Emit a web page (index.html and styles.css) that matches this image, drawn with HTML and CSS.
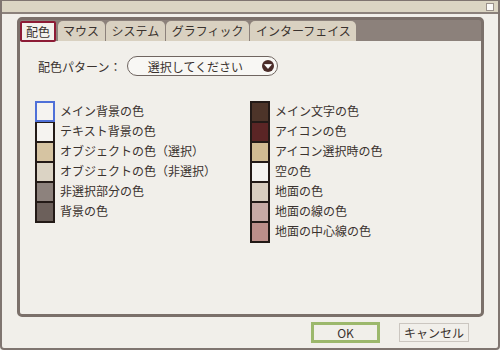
FILE: index.html
```html
<!DOCTYPE html>
<html>
<head>
    <meta charset="utf-8">
    <title>配色</title>
    <link rel="stylesheet" href="styles.css">
</head>
<body>
    <div class="window">
        <div class="titlebar"><span class="title-btn"></span></div>
        <div class="main">
            <div class="panel">
                <div class="tabs">
                    <span class="tab active">配色</span>
                    <span class="tab">マウス</span>
                    <span class="tab">システム</span>
                    <span class="tab">グラフィック</span>
                    <span class="tab">インターフェイス</span>
                </div>
                <div class="content">
                    <div class="pattern">
                        <span class="pattern-label">配色パターン：</span>
                        <div class="select">
                            <span class="select-text">選択してください</span>
                            <svg class="select-arrow" width="12" height="12" viewBox="0 0 12 12">
                                <circle cx="6" cy="6" r="6" fill="#4b2c29"/>
                                <path d="M2.6 4.6 L9.4 4.6 L6 8.4 Z" fill="#fff" stroke="#fff" stroke-width="0.8" stroke-linejoin="round"/>
                            </svg>
                        </div>
                    </div>
                    <div class="colors">
                        <ul class="color-list">
                            <li><span class="swatch selected" style="background:#f5f3f0"></span>メイン背景の色</li>
                            <li><span class="swatch" style="background:#f5f3f0"></span>テキスト背景の色</li>
                            <li><span class="swatch" style="background:#d6c4a2"></span>オブジェクトの色（選択）</li>
                            <li><span class="swatch" style="background:#dbd3c4"></span>オブジェクトの色（非選択）</li>
                            <li><span class="swatch" style="background:#8d827d"></span>非選択部分の色</li>
                            <li><span class="swatch" style="background:#6c605b"></span>背景の色</li>
                        </ul>
                        <ul class="color-list">
                            <li><span class="swatch" style="background:#4d3429"></span>メイン文字の色</li>
                            <li><span class="swatch" style="background:#5b2525"></span>アイコンの色</li>
                            <li><span class="swatch" style="background:#d1bb93"></span>アイコン選択時の色</li>
                            <li><span class="swatch" style="background:#f5f3f0"></span>空の色</li>
                            <li><span class="swatch" style="background:#d9cdbf"></span>地面の色</li>
                            <li><span class="swatch" style="background:#c8aaa5"></span>地面の線の色</li>
                            <li><span class="swatch" style="background:#bd8f8a"></span>地面の中心線の色</li>
                        </ul>
                    </div>
                </div>
            </div>
            <div class="buttons">
                <button class="btn ok">OK</button>
                <button class="btn">キャンセル</button>
            </div>
        </div>
    </div>
</body>
</html>
```

FILE: styles.css
```css
/* Settings dialog, colour scheme tab */
body {
    margin: 0;
    font-family: "Noto Sans CJK JP", "Noto Sans", sans-serif;
    font-size: 12px;
    color: #3a322e;
    background: #f1efea;
}

.window {
    width: 500px;
    height: 350px;
    box-sizing: border-box;
    border: 2px solid #7f7570;
    border-top-width: 1px;
    border-radius: 0 0 4px 4px;
    background: #f1efea;
    display: flex;
    flex-direction: column;
}

.titlebar {
    height: 11px;
    flex: none;
    background: #dbd5c3;
    border-bottom: 2px solid #8b817b;
    display: flex;
    justify-content: flex-end;
    align-items: center;
    padding-right: 4px;
}

.title-btn {
    width: 6px;
    height: 6px;
    border: 1px solid #9a918b;
    background: #fbfaf8;
}

.main {
    flex: 1;
    padding: 3px 14px 0 15px;
    display: flex;
    flex-direction: column;
}

/* Tab panel */
.panel {
    height: 300px;
    box-sizing: border-box;
    border: 3px solid #7b706a;
    border-radius: 5px;
    background: #8c817b;
    display: flex;
    flex-direction: column;
    overflow: hidden;
}

.tabs {
    height: 21px;
    flex: none;
    display: flex;
    align-items: flex-end;
    gap: 1.5px;
}

.tab {
    height: 20px;
    box-sizing: border-box;
    padding: 0 5.5px;
    line-height: 20px;
    background: #d9d1c1;
    border-radius: 5px 5px 0 0;
    color: #3a322e;
    white-space: nowrap;
}

.tab.active {
    padding: 0 4px;
    line-height: 17px;
    height: 21px;
    border: 2px solid #8d1b36;
    border-radius: 2px;
    background: #f3f1ed;
    position: relative;
    top: 1px;
}

.content {
    flex: 1;
    background: #f1efea;
    padding: 15px 0 0 15px;
}

.pattern {
    display: flex;
    align-items: center;
    gap: 6px;
    height: 20px;
    margin-left: 3px;
}

.select {
    width: 151px;
    height: 20px;
    box-sizing: border-box;
    border: 1px solid #6f6560;
    border-radius: 10px;
    background: #f8f7f4;
    display: flex;
    align-items: center;
    padding-right: 3px;
}

.select-text {
    flex: 1;
    text-align: center;
}

.select-arrow {
    display: block;
    flex: none;
}

/* Colour swatches */
.colors {
    display: grid;
    grid-template-columns: 215px auto;
    margin-top: 25px;
}

.color-list {
    list-style: none;
    margin: 0;
    padding: 0;
}

.color-list li {
    display: flex;
    gap: 5px;
    height: 20px;
    line-height: 20px;
    white-space: nowrap;
}

.swatch {
    flex: none;
    width: 20px;
    height: 20px;
    box-sizing: border-box;
    border: 2px solid #231a17;
    border-bottom: 0;
}

.color-list li:last-child .swatch {
    height: 22px;
    border-bottom: 2px solid #231a17;
}

.swatch.selected {
    height: 21px;
    border: 2px solid #4f70d8;
    position: relative;
    z-index: 1;
}

/* Dialog buttons */
.buttons {
    display: flex;
    justify-content: flex-end;
    align-items: center;
    gap: 19px;
    margin-top: 5px;
    padding-right: 15px;
}

.btn {
    font-family: inherit;
    font-size: 12px;
    color: #3a322e;
    background: #f1efea;
    width: 70px;
    height: 19px;
    padding: 0;
    border: 1px solid #cbc6c0;
    line-height: 17px;
}

.btn.ok {
    width: 69px;
    height: 21px;
    border: 3px solid #9cb86c;
    line-height: 15px;
}
```
